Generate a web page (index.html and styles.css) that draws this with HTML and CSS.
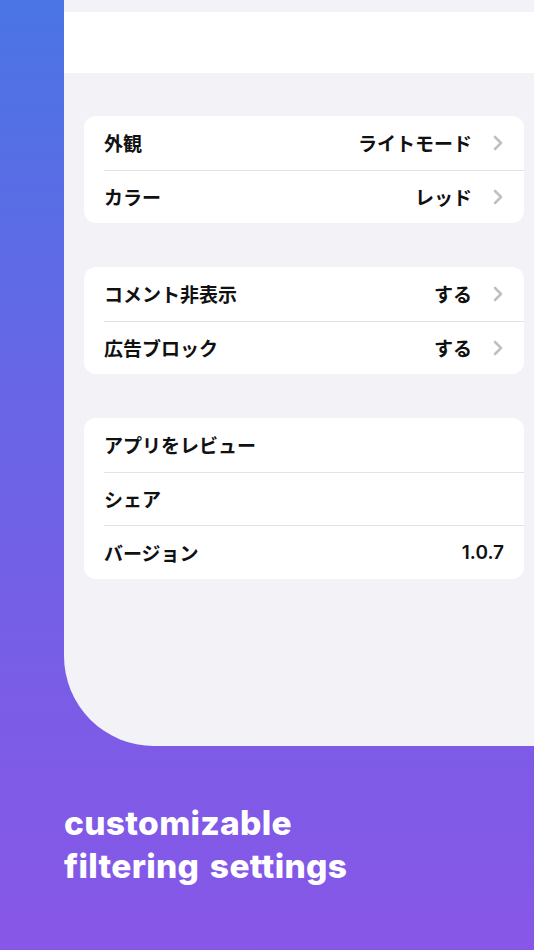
FILE: index.html
```html
<!DOCTYPE html>
<html lang="ja">
<head>
<meta charset="utf-8">
<link rel="stylesheet" href="styles.css">
</head>
<body>
<div class="screen">
  <div class="navbar"></div>
  <div class="content">
    <div class="card">
      <div class="row"><span class="label">外観</span><span class="value">ライトモード</span><svg class="chev" viewBox="0 0 10 16"><path d="M2 2l6 6-6 6"/></svg></div>
      <div class="row"><span class="label">カラー</span><span class="value">レッド</span><svg class="chev" viewBox="0 0 10 16"><path d="M2 2l6 6-6 6"/></svg></div>
    </div>
    <div class="card">
      <div class="row"><span class="label">コメント非表示</span><span class="value">する</span><svg class="chev" viewBox="0 0 10 16"><path d="M2 2l6 6-6 6"/></svg></div>
      <div class="row"><span class="label">広告ブロック</span><span class="value">する</span><svg class="chev" viewBox="0 0 10 16"><path d="M2 2l6 6-6 6"/></svg></div>
    </div>
    <div class="card">
      <div class="row"><span class="label">アプリをレビュー</span></div>
      <div class="row"><span class="label">シェア</span></div>
      <div class="row"><span class="label">バージョン</span><span class="value num">1.0.7</span></div>
    </div>
  </div>
</div>
<div class="caption">customizable<br>filtering settings</div>
</body>
</html>
```
FILE: styles.css
```css
html, body {
  margin: 0;
  padding: 0;
}
body {
  width: 534px;
  height: 950px;
  overflow: hidden;
  background: linear-gradient(180deg, #4a74e4 0%, #6a64e6 45%, #7b5ce6 75%, #8857e8 100%);
  font-family: "Noto Sans CJK JP", "Noto Sans", sans-serif;
}
.screen {
  margin-left: 64px;
  height: 746px;
  box-sizing: border-box;
  padding-top: 12px;
  background: #f2f2f7;
  border-bottom-left-radius: 90px;
}
.navbar {
  height: 61px;
  background: #ffffff;
}
.content {
  padding: 43px 10px 0 20px;
  display: flex;
  flex-direction: column;
  gap: 44px;
}
.card {
  background: #ffffff;
  border-radius: 12px;
  overflow: hidden;
}
.row {
  height: 53.5px;
  display: flex;
  align-items: center;
  margin-left: 20px;
  padding-right: 20px;
  border-top: 1px solid #e3e3e6;
  box-sizing: border-box;
  font-size: 19px;
  font-weight: 700;
  color: #111111;
}
.row:first-child {
  border-top: none;
}
.label {
  flex: 1;
}
.num {
  font-family: "Inter", "Noto Sans", sans-serif;
  font-weight: 600;
  font-size: 19px;
}
.chev {
  width: 10px;
  height: 16px;
  margin-left: 21px;
  margin-right: 1px;
  fill: none;
  stroke: #c0c0c4;
  stroke-width: 2.6;
  stroke-linecap: round;
  stroke-linejoin: round;
}
.caption {
  padding: 56px 0 0 64px;
  color: #ffffff;
  font-family: "Inter", sans-serif;
  font-weight: 800;
  font-size: 33.5px;
  line-height: 43px;
  letter-spacing: 0.3px;
  word-spacing: 3px;
}
```
